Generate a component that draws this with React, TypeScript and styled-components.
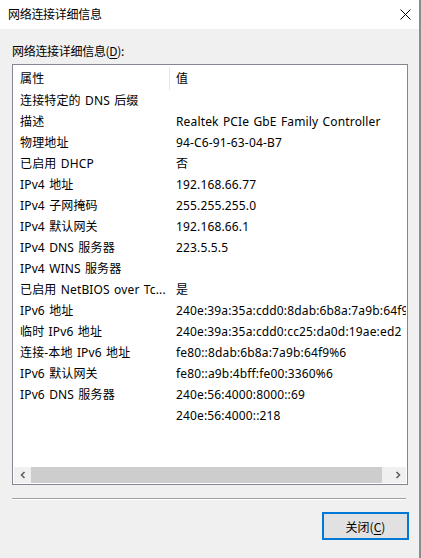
import React from "react";
import styled, { createGlobalStyle } from "styled-components";

const GlobalStyle = createGlobalStyle`
  html, body { margin: 0; padding: 0; background: #f0f0f0; }
  body {
    font-family: "Noto Sans", "Noto Sans CJK SC", sans-serif;
    font-size: 12px;
    color: #000;
  }
  * { box-sizing: border-box; }
`;

const Window = styled.div`
  width: 421px;
  height: 558px;
  display: flex;
  flex-direction: column;
  background: #f0f0f0;
  border-right: 2px solid #8c8c8c;
  overflow: hidden;
`;

const TitleBar = styled.div`
  height: 29px;
  flex: none;
  background: #fff;
  display: flex;
  align-items: center;
  justify-content: space-between;
  padding: 0 0 3px 8px;
  font-family: "Noto Sans CJK SC", sans-serif;
  font-size: 12px;
  letter-spacing: -0.3px;
`;

const CloseBtn = styled.div`
  width: 46px;
  height: 26px;
  display: flex;
  align-items: center;
  justify-content: center;
  margin-top: 3px;
  margin-right: -9px;
`;

const Body = styled.div`
  flex: 1;
  display: flex;
  flex-direction: column;
  padding: 14px 0 0 12px;
`;

const Label = styled.div`
  height: 21px;
  line-height: 16px;
  font-family: "Noto Sans CJK SC", sans-serif;
  letter-spacing: -0.3px;
`;

const Mn = styled.span`
  text-decoration: underline;
  text-underline-offset: 2px;
`;

const ListBox = styled.div`
  width: 396px;
  height: 421px;
  border: 1px solid #828790;
  background: #fff;
  padding: 1px;
  display: flex;
  flex-direction: column;
  overflow: hidden;
`;

const Row = styled.div<{ $header?: boolean }>`
  display: flex;
  height: ${(p) => (p.$header ? "24px" : "21px")};
  align-items: center;
  flex: none;
  white-space: nowrap;
  letter-spacing: 0.15px;
  word-spacing: 1px;
`;

const Cell = styled.div<{ $first?: boolean; $divider?: boolean }>`
  ${(p) => (p.$first ? "width: 156px; flex: none;" : "flex: 1; min-width: 0;")}
  padding-left: 6px;
  padding-right: ${(p) => (p.$first ? "2px" : "0")};
  overflow: hidden;
  text-overflow: ${(p) => (p.$first ? "ellipsis" : "clip")};
  height: 100%;
  line-height: 21px;
  ${(p) => (p.$divider ? "border-right: 1px solid #e5e5e5;" : "")}
`;

const HeaderCell = styled(Cell)`
  line-height: 24px;
  height: 23px;
  align-self: flex-start;
  margin-top: 1px;
`;

const Spacer = styled.div`
  flex: 1;
`;

const HScroll = styled.div`
  height: 16px;
  flex: none;
  display: flex;
  background: #f0f0f0;
`;

const Arrow = styled.div`
  width: 17px;
  flex: none;
  display: flex;
  align-items: center;
  justify-content: center;
`;

const Track = styled.div`
  flex: 1;
  display: flex;
  padding-right: 7px;
`;

const Thumb = styled.div`
  flex: 1;
  background: #cdcdcd;
`;

const Separator = styled.div`
  width: 394px;
  height: 2px;
  margin-top: 13px;
  border-top: 1px solid #a0a0a0;
  border-bottom: 1px solid #fff;
`;

const Footer = styled.div`
  display: flex;
  justify-content: flex-end;
  padding-right: 10px;
  margin-top: 12px;
`;

const Button = styled.button`
  width: 87px;
  height: 28px;
  border: 2px solid #0078d7;
  background: #e1e1e1;
  font-family: "Noto Sans CJK SC", sans-serif;
  font-size: 12px;
  color: #000;
  padding: 0;
  display: flex;
  align-items: center;
  justify-content: center;
`;

const rows: [string, string][] = [
  ["连接特定的 DNS 后缀", ""],
  ["描述", "Realtek PCIe GbE Family Controller"],
  ["物理地址", "94-C6-91-63-04-B7"],
  ["已启用 DHCP", "否"],
  ["IPv4 地址", "192.168.66.77"],
  ["IPv4 子网掩码", "255.255.255.0"],
  ["IPv4 默认网关", "192.168.66.1"],
  ["IPv4 DNS 服务器", "223.5.5.5"],
  ["IPv4 WINS 服务器", ""],
  ["已启用 NetBIOS over Tc...", "是"],
  ["IPv6 地址", "240e:39a:35a:cdd0:8dab:6b8a:7a9b:64f9"],
  ["临时 IPv6 地址", "240e:39a:35a:cdd0:cc25:da0d:19ae:ed2"],
  ["连接-本地 IPv6 地址", "fe80::8dab:6b8a:7a9b:64f9%6"],
  ["IPv6 默认网关", "fe80::a9b:4bff:fe00:3360%6"],
  ["IPv6 DNS 服务器", "240e:56:4000:8000::69"],
  ["", "240e:56:4000::218"],
];

export default function App() {
  return (
    <>
      <GlobalStyle />
      <Window>
        <TitleBar>
          <span>网络连接详细信息</span>
          <CloseBtn>
            <svg width="11" height="11" viewBox="0 0 11 11">
              <path d="M0.5 0.5 L10.5 10.5 M10.5 0.5 L0.5 10.5" stroke="#000" strokeWidth="1" />
            </svg>
          </CloseBtn>
        </TitleBar>
        <Body>
          <Label>
            网络连接详细信息(<Mn>D</Mn>):
          </Label>
          <ListBox>
            <Row $header>
              <HeaderCell $first $divider>属性</HeaderCell>
              <HeaderCell>值</HeaderCell>
            </Row>
            {rows.map(([k, v], i) => (
              <Row key={i}>
                <Cell $first>{k}</Cell>
                <Cell>{v}</Cell>
              </Row>
            ))}
            <Spacer />
            <HScroll>
              <Arrow>
                <svg width="8" height="8" viewBox="0 0 8 8">
                  <path d="M5.5 1 L2.5 4 L5.5 7" stroke="#606060" strokeWidth="1.6" fill="none" />
                </svg>
              </Arrow>
              <Track>
                <Thumb />
              </Track>
              <Arrow>
                <svg width="8" height="8" viewBox="0 0 8 8">
                  <path d="M2.5 1 L5.5 4 L2.5 7" stroke="#606060" strokeWidth="1.6" fill="none" />
                </svg>
              </Arrow>
            </HScroll>
          </ListBox>
          <Separator />
          <Footer>
            <Button>
              关闭(<Mn>C</Mn>)
            </Button>
          </Footer>
        </Body>
      </Window>
    </>
  );
}
